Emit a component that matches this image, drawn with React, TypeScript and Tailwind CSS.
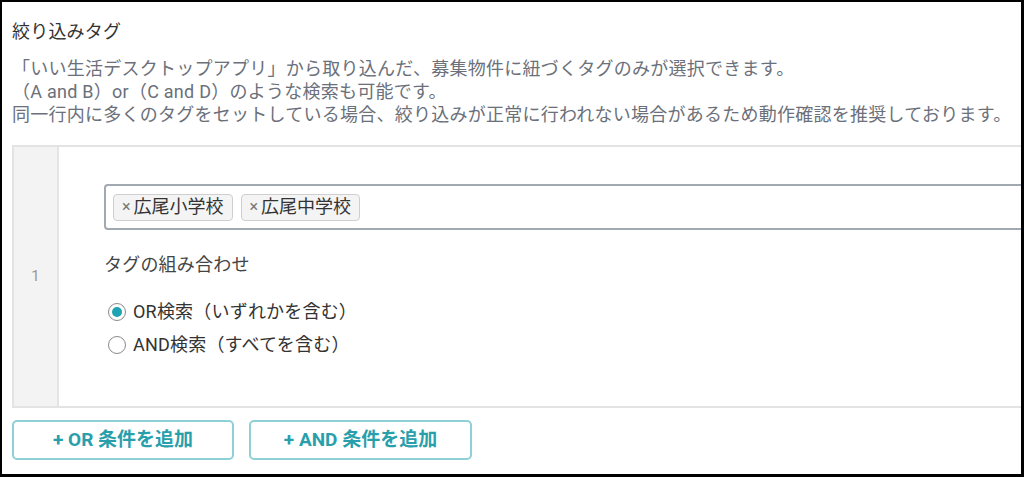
import { useState } from 'react'

const tags = ['広尾小学校', '広尾中学校']

function Radio({ checked, label, onClick }: { checked: boolean; label: string; onClick: () => void }) {
  return (
    <button type="button" onClick={onClick} className="flex items-center h-[33px] text-left">
      <span className="ml-[4px] w-[18px] h-[18px] rounded-full border-[1.5px] border-[#8a8a8a] bg-white flex items-center justify-center">
        {checked && <span className="w-[10px] h-[10px] rounded-full bg-[#1ea3b2]" />}
      </span>
      <span className="ml-[7px] text-[18px] leading-[24px] text-[#333] tracking-[0.2px]">{label}</span>
    </button>
  )
}

export default function App() {
  const [mode, setMode] = useState<'or' | 'and'>('or')

  return (
    <div className="w-[1024px] h-[477px] overflow-hidden bg-white border-t-2 border-l-2 border-r-[3px] border-b-[3px] border-black font-['Roboto','Noto_Sans_CJK_JP',sans-serif]">
      <div className="w-[1120px] pl-[10px] pt-[18px]">
        <h2 className="text-[18px] leading-[24px] text-[#333] tracking-[0.2px]">絞り込みタグ</h2>
        <div className="mt-[13px] text-[18px] leading-[23px] text-[#6b707a] tracking-[0.25px]">
          <p>「いい生活デスクトップアプリ」から取り込んだ、募集物件に紐づくタグのみが選択できます。</p>
          <p>（A and B）or（C and D）のような検索も可能です。</p>
          <p>同一行内に多くのタグをセットしている場合、絞り込みが正常に行われない場合があるため動作確認を推奨しております。</p>
        </div>

        <div className="mt-[19px] flex border-2 border-[#e2e3e5] h-[263px]">
          <div className="w-[45px] bg-[#f3f3f3] border-r-2 border-[#e4e4e4] flex items-center justify-center text-[15px] text-[#999]">
            1
          </div>
          <div className="flex-1 pl-[45px] pt-[37px]">
            <div className="h-[46px] border-2 border-[#a3a9b0] rounded-[4px] flex items-center gap-[8px] px-[7px]">
              {tags.map((t) => (
                <span
                  key={t}
                  className="h-[27px] flex items-center pl-[8px] pr-[8px] bg-[#f4f4f4] border border-[#cfcfcf] rounded-[4px] text-[18px] leading-none text-[#333]"
                >
                  <span className="text-[16px] text-[#777] mr-[3px]">×</span>
                  {t}
                </span>
              ))}
            </div>
            <p className="mt-[23px] text-[18px] leading-[24px] text-[#444] tracking-[0.2px]">タグの組み合わせ</p>
            <div className="mt-[18px] flex flex-col">
              <Radio checked={mode === 'or'} label="OR検索（いずれかを含む）" onClick={() => setMode('or')} />
              <Radio checked={mode === 'and'} label="AND検索（すべてを含む）" onClick={() => setMode('and')} />
            </div>
          </div>
        </div>

        <div className="mt-[12px] flex gap-[15px]">
          <button className="w-[222px] h-[40px] border-2 border-[#8fd0d7] rounded-[5px] text-[19px] font-bold text-[#2a9fac]">
            + OR 条件を追加
          </button>
          <button className="w-[223px] h-[40px] border-2 border-[#8fd0d7] rounded-[5px] text-[19px] font-bold text-[#2a9fac]">
            + AND 条件を追加
          </button>
        </div>
      </div>
    </div>
  )
}
